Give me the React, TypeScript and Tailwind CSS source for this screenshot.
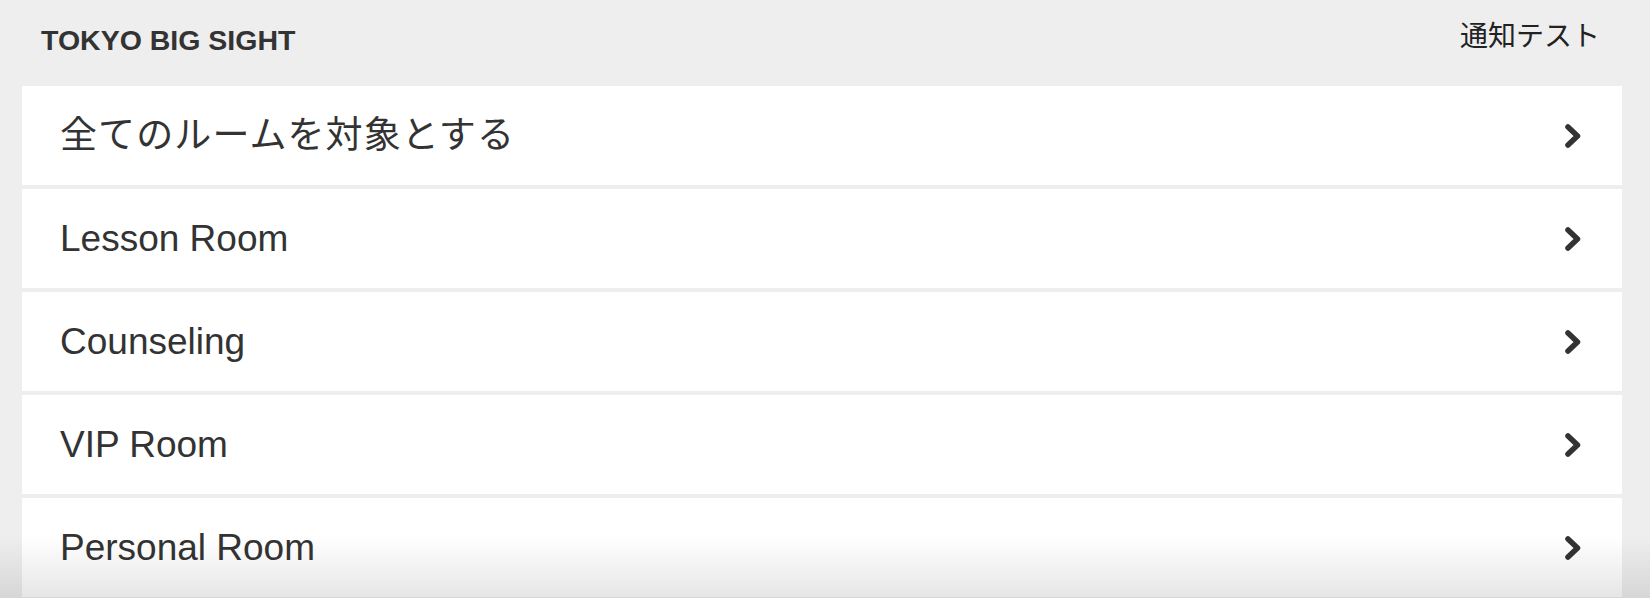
const rooms = ["全てのルームを対象とする", "Lesson Room", "Counseling", "VIP Room", "Personal Room"];

function Chevron() {
  return (
    <svg width="16" height="24" viewBox="0 0 16 24" fill="none">
      <polyline points="3,3 12.5,12 3,21" stroke="#333333" strokeWidth="5.5" strokeLinecap="round" strokeLinejoin="round" />
    </svg>
  );
}

export default function App() {
  return (
    <div
      className="relative h-[598px] w-full overflow-hidden bg-[#eeeeee] text-[#333333]"
      style={{ fontFamily: '"Liberation Sans", "Noto Sans CJK JP", sans-serif' }}
    >
      <div className="flex h-[86px] items-center justify-between pb-[6px] pl-[41px] pr-[50px]">
        <h1 className="text-[28.5px] font-bold leading-none">TOKYO BIG SIGHT</h1>
        <span className="mb-[6px] text-[28px] leading-none text-[#222222]">通知テスト</span>
      </div>

      <div className="ml-[22px] mr-[28px] flex flex-col gap-[4px]">
        {rooms.map((room, i) => (
          <div key={i} className="flex h-[99px] items-center justify-between bg-white pl-[38px] pr-[41px]">
            <span className={i === 0 ? "text-[37px] leading-none tracking-[1.1px]" : "text-[37px] leading-none"}>{room}</span>
            <Chevron />
          </div>
        ))}
      </div>

      <div className="pointer-events-none absolute bottom-0 left-0 right-0 h-[62px] bg-linear-to-b from-transparent to-black/10" />
    </div>
  );
}
